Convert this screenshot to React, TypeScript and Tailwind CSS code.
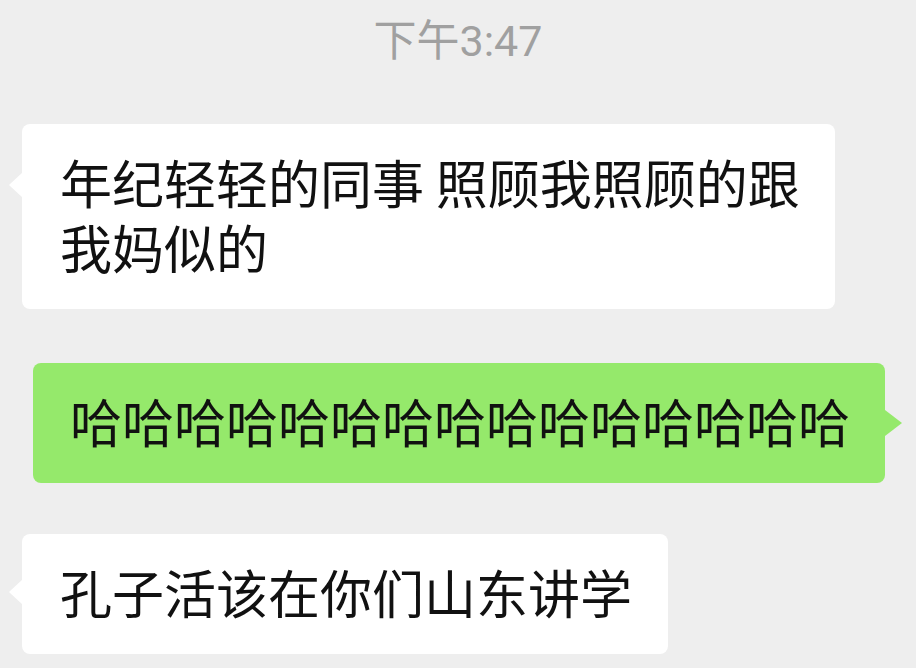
import React from "react";

export default function App() {
  return (
    <div className="w-[916px] h-[668px] bg-[#eeeeee] overflow-hidden flex flex-col font-['Noto_Sans_CJK_SC',sans-serif] text-[#111111]">
      <div className="pt-[20px] text-center text-[43px] leading-[43px] text-[#a0a0a0] font-['Roboto','Noto_Sans_CJK_SC',sans-serif]">
        下午3:47
      </div>

      <div className="relative self-start ml-[22px] mt-[61px] w-[813px] bg-white rounded-[8px] pl-[38px] pr-[20px] pt-[25px] pb-[30px] text-[52px] leading-[65px]">
        <div className="absolute left-[-13px] top-[48px] w-0 h-0 border-y-[13px] border-y-transparent border-r-[14px] border-r-white" />
        年纪轻轻的同事 照顾我照顾的跟我妈似的
      </div>

      <div className="relative self-start ml-[33px] mt-[54px] bg-[#95e96b] rounded-[8px] pl-[37px] pr-[35px] pt-[25px] pb-[30px] text-[52px] leading-[65px] whitespace-nowrap">
        <div className="absolute right-[-17px] top-[47px] w-0 h-0 border-y-[13px] border-y-transparent border-l-[17px] border-l-[#95e96b]" />
        哈哈哈哈哈哈哈哈哈哈哈哈哈哈哈
      </div>

      <div className="relative self-start ml-[22px] mt-[51px] bg-white rounded-[8px] pl-[38px] pr-[36px] pt-[25px] pb-[30px] text-[52px] leading-[65px] whitespace-nowrap">
        <div className="absolute left-[-13px] top-[45px] w-0 h-0 border-y-[13px] border-y-transparent border-r-[14px] border-r-white" />
        孔子活该在你们山东讲学
      </div>
    </div>
  );
}
